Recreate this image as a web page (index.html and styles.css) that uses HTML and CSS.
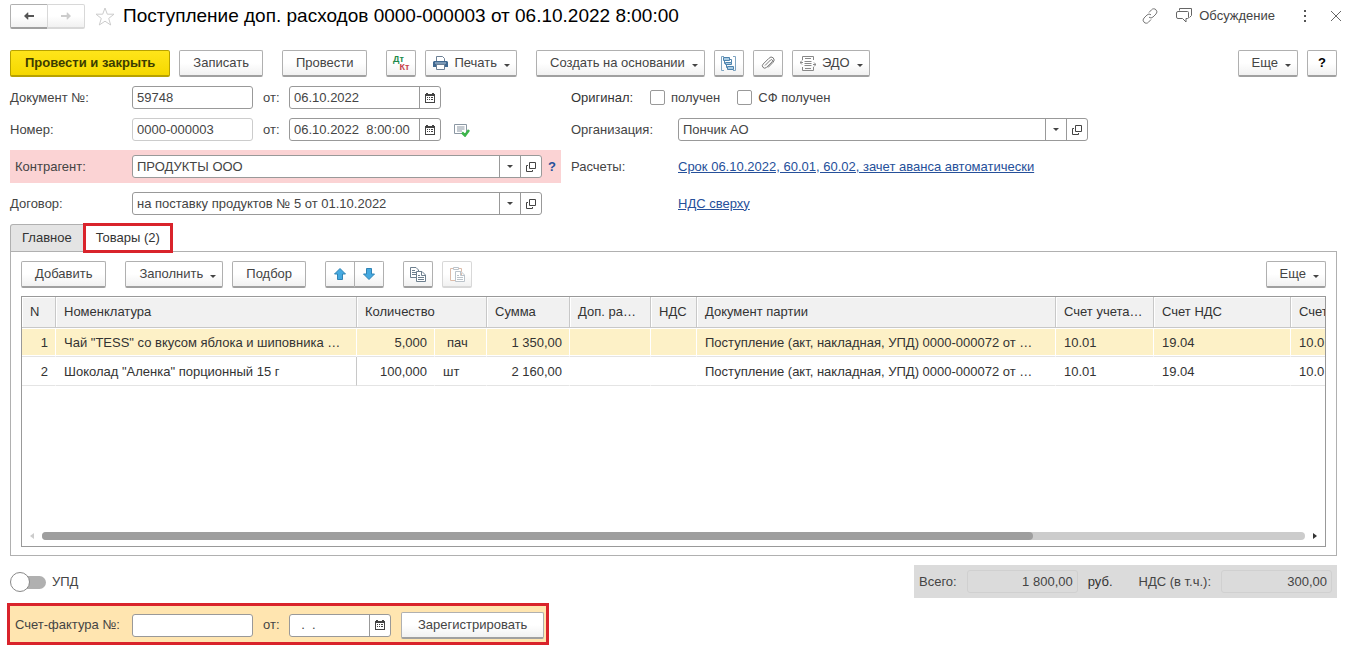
FILE: index.html
```html
<!DOCTYPE html>
<html lang="ru">
  <head>
    <meta charset="UTF-8">
    <title>Поступление доп. расходов</title>
    <link rel="stylesheet" href="styles.css">
  </head>
  <body>
    <!-- shared icons -->
    <svg class="sprite" aria-hidden="true">
      <symbol id="i-calendar" viewBox="0 0 10 10">
        <path d="M0 1h1V0h2v1h4V0h2v1h1v9H0z" fill="#444"/>
        <path d="M1 3h8v6H1z" fill="#fff"/>
        <path d="M2 4h1v1H2zM4 4h1v1H4zM6 4h2v1H6zM2 6h1v1H2zM4 6h1v1H4zM6 6h2v1H6z" fill="#444"/>
      </symbol>
      <symbol id="i-open" viewBox="0 0 10 10">
        <path d="M3.5.5h6v6h-6zM2 3.500H.5v6h6V8" fill="none" stroke="#444"/>
      </symbol>
      <symbol id="i-caret" viewBox="0 0 6 3">
        <path d="M0 0h6L3 3z" fill="#444"/>
      </symbol>
    </svg>

    <header class="titlebar">
      <div class="group">
        <button class="btn nav" aria-label="Назад"><svg width="14" height="10" viewBox="0 0 14 10"><path d="M0 5l5-5h1v3.500h8v3H6V10H5z" fill="#555"/></svg></button>
        <button class="btn nav" aria-label="Вперед" disabled><svg width="14" height="10" viewBox="0 0 14 10"><path d="M14 5L9 0H8v3.500H0v3h8V10h1z" fill="#ccc"/></svg></button>
      </div>
      <button class="plain star" aria-label="Избранное"><svg width="20" height="19" viewBox="0 0 20 19"><path d="M10 1l2.300 6.200H19l-5.300 4.200 2 6.600L10 14.200 4.300 18l2-6.600L1 7.200h6.700z" fill="none" stroke="#ccc"/></svg></button>
      <h1>Поступление доп. расходов 0000-000003 от 06.10.2022 8:00:00</h1>
      <div class="title-tools">
        <button class="plain" aria-label="Ссылка"><svg width="16" height="16" viewBox="0 0 16 16" fill="none" stroke="#777"><path d="M7 4.500l2.500-2.700a3 3 0 0 1 4.500 0 3 3 0 0 1 0 4.200l-3 3a3 3 0 0 1-4 .2M9 11.500l-2.500 2.700a3 3 0 0 1-4.500 0 3 3 0 0 1 0-4.200l3-3a3 3 0 0 1 4-.2"/></svg></button>
        <button class="plain"><svg width="17" height="15" viewBox="0 0 17 15" fill="none" stroke="#666"><path d="M3.500 2.500v-2h12v7l-2 2M2 3.500h9.500q1 0 1 1v5q0 1-1 1H10v3.500L6.500 10.500H2q-1.500 0-1.500-1.500V5q0-1.500 1.500-1.500z"/></svg>Обсуждение</button>
        <button class="plain more" aria-label="Еще"><svg width="4" height="12" viewBox="0 0 4 12" fill="#555"><path d="M1 0h2v2H1zM1 5h2v2H1zM1 10h2v2H1z"/></svg></button>
        <button class="plain close" aria-label="Закрыть"><svg width="12" height="12" viewBox="0 0 12 12"><path d="M1 1l10 10M11 1L1 11" stroke="#666"/></svg></button>
      </div>
    </header>

    <div class="toolbar">
      <button class="btn primary">Провести и закрыть</button>
      <button class="btn">Записать</button>
      <button class="btn sep">Провести</button>
      <button class="btn icon sep dtkt" aria-label="Проводки"><span class="dt">Дт</span><span class="kt">Кт</span></button>
      <button class="btn menu print"><svg width="15" height="14" viewBox="0 0 15 14"><path d="M3.500 5V.5h6l2 2V5" fill="#fff" stroke="#6b7f94"/><path d="M1 5h13l1 1v5H0V6z" fill="#3f6890"/><path d="M2 7h11" stroke="#b9cadb"/><path d="M3.500 8.500h8v5h-8z" fill="#fff" stroke="#6b7f94"/></svg>Печать<svg class="caret"><use href="#i-caret"/></svg></button>
      <button class="btn menu sep">Создать на основании<svg class="caret"><use href="#i-caret"/></svg></button>
      <button class="btn icon" aria-label="Структура подчиненности"><svg width="15" height="15" viewBox="0 0 15 15" fill="none" stroke="#4d83ad"><path d="M3 .5H.5v14H3M12 .5h2.500v14H12" stroke="#7da3c0"/><path d="M2.500 1.500h6v3h-6zM4.500 6.500h6v2h-6zM6.500 10.500h6v3h-6z" fill="#a9cbe3"/><path d="M9 3.500h1.500v3M3.500 5v2.500h1M5.500 9v2.500h1"/></svg></button>
      <button class="btn icon" aria-label="Файлы"><svg width="14" height="14" viewBox="0 0 14 14"><path d="M4 9.500l5.500-5.500q1-1 1.800 0 .8.8-.3 1.900l-5.500 5.500q-1.800 1.700-3.500 0-1.600-1.700.2-3.400l5.500-5.500Q10-.3 12.200 1.800q2.100 2.200 0 4.400L7 11.500" fill="none" stroke="#777"/></svg></button>
      <button class="btn menu edo"><svg width="16" height="15" viewBox="0 0 16 15" fill="none" stroke="#888"><path d="M2.500 4V.5h11V4M2.500 11v3.500h11V11M5 2.500h6M4.500 5.500h7M4.500 7.500h7M4.500 9.500h7M5 12.500h6M0 6.500h3M13 8.500h3M2 4.500l-2 2 2 2M14 6.500l2 2-2 2"/></svg>ЭДО<svg class="caret"><use href="#i-caret"/></svg></button>
      <div class="right">
        <button class="btn menu">Еще<svg class="caret"><use href="#i-caret"/></svg></button>
        <button class="btn icon help">?</button>
      </div>
    </div>

    <form class="fields">
      <div class="column">
        <div class="row">
          <label class="name" for="doc">Документ №:</label>
          <input class="field code" id="doc" value="59748">
          <label class="from" for="docdate">от:</label>
          <div class="combo date"><input id="docdate" value="06.10.2022"><button type="button" aria-label="Календарь"><svg><use href="#i-calendar"/></svg></button></div>
        </div>
        <div class="row">
          <label class="name" for="num">Номер:</label>
          <input class="field code light" id="num" value="0000-000003">
          <label class="from" for="numdate">от:</label>
          <div class="combo date"><input id="numdate" value="06.10.2022  8:00:00"><button type="button" aria-label="Календарь"><svg><use href="#i-calendar"/></svg></button></div>
          <svg class="posted" width="16" height="14" viewBox="0 0 16 14"><path d="M.5 1.500h12v9H.5z" fill="#fff" stroke="#8b97a3"/><path d="M3 4h7.500M3 6h7.500M3 8h5" stroke="#8b97a3"/><path d="M8 9.500l3 3L15 7" fill="none" stroke="#3bb54a" stroke-width="2.500"/></svg>
        </div>
        <div class="row marked">
          <label class="name" for="partner">Контрагент:</label>
          <div class="combo"><select id="partner"><option>ПРОДУКТЫ ООО</option></select><span class="arrow"><svg class="caret"><use href="#i-caret"/></svg></span><button type="button" aria-label="Открыть"><svg><use href="#i-open"/></svg></button></div>
          <a class="hint" href="#">?</a>
        </div>
        <div class="row">
          <label class="name" for="contract">Договор:</label>
          <div class="combo"><select id="contract"><option>на поставку продуктов № 5 от 01.10.2022</option></select><span class="arrow"><svg class="caret"><use href="#i-caret"/></svg></span><button type="button" aria-label="Открыть"><svg><use href="#i-open"/></svg></button></div>
        </div>
      </div>
      <div class="column second">
        <div class="row">
          <span class="original">Оригинал:</span>
          <label class="check"><input type="checkbox">получен</label>
          <label class="check"><input type="checkbox">СФ получен</label>
        </div>
        <div class="row">
          <label class="name" for="org">Организация:</label>
          <div class="combo"><select id="org"><option>Пончик АО</option></select><span class="arrow"><svg class="caret"><use href="#i-caret"/></svg></span><button type="button" aria-label="Открыть"><svg><use href="#i-open"/></svg></button></div>
        </div>
        <div class="row tall">
          <span class="name">Расчеты:</span>
          <a href="#">Срок 06.10.2022, 60.01, 60.02, зачет аванса автоматически</a>
        </div>
        <div class="row">
          <span class="name"></span>
          <a href="#">НДС сверху</a>
        </div>
      </div>
    </form>

    <nav class="tabs">
      <button class="tab">Главное</button>
      <button class="tab active">Товары (2)</button>
    </nav>

    <section class="panel">
      <div class="toolbar">
        <button class="btn">Добавить</button>
        <button class="btn menu sep">Заполнить<svg class="caret"><use href="#i-caret"/></svg></button>
        <button class="btn">Подбор</button>
        <div class="group sep">
          <button class="btn icon" aria-label="Вверх"><svg width="12" height="12" viewBox="0 0 12 12"><path d="M6 .5L11.500 6H8.500v5.500h-5V6H.5z" fill="#45a9e0" stroke="#2f83b5"/></svg></button>
          <button class="btn icon" aria-label="Вниз"><svg width="12" height="12" viewBox="0 0 12 12"><path d="M6 11.500L.5 6h3V.5h5V6h3z" fill="#45a9e0" stroke="#2f83b5"/></svg></button>
        </div>
        <button class="btn icon sep" aria-label="Копировать"><svg width="16" height="15" viewBox="0 0 16 15" fill="#fff" stroke="#6d7f8e"><path d="M.5.5H6L8.500 3v7.500h-8zM2 3.500h3M2 5.500h5M2 7.500h5"/><path d="M6.500 4.500H12L15.500 8v6.500h-9zM11.500 5v3.500H15M8 8.500h2M8 10.500h6M8 12.500h6"/></svg></button>
        <button class="btn icon" aria-label="Вставить" disabled><svg width="15" height="15" viewBox="0 0 15 15" fill="#fff" stroke="#bbc3ca"><path d="M.5 1.500h11v12H.5z" stroke="#dcbcaa"/><path d="M3.500.5h5v2h-5z"/><path d="M5.500 4.500H11L14.500 8v6.500h-9zM10.500 5v3.500H14M7 8.500h2M7 10.500h6M7 12.500h6"/></svg></button>
        <div class="right">
          <button class="btn menu">Еще<svg class="caret"><use href="#i-caret"/></svg></button>
        </div>
      </div>

      <div class="grid">
        <table>
          <colgroup>
            <col class="c-n"><col class="c-item"><col class="c-qty"><col class="c-unit"><col class="c-sum"><col class="c-extra"><col class="c-vat"><col class="c-doc"><col class="c-acc"><col class="c-vatacc"><col class="c-acc">
          </colgroup>
          <thead>
            <tr><th>N</th><th>Номенклатура</th><th colspan="2">Количество</th><th>Сумма</th><th>Доп. ра…</th><th>НДС</th><th>Документ партии</th><th>Счет учета…</th><th>Счет НДС</th><th>Счет</th></tr>
          </thead>
          <tbody>
            <tr class="selected"><td class="num">1</td><td>Чай "TESS" со вкусом яблока и шиповника …</td><td class="num">5,000</td><td class="unit">пач</td><td class="num">1 350,00</td><td></td><td></td><td>Поступление (акт, накладная, УПД) 0000-000072 от …</td><td>10.01</td><td>19.04</td><td>10.0</td></tr>
            <tr><td class="num">2</td><td class="edge">Шоколад "Аленка" порционный 15 г</td><td class="num">100,000</td><td>шт</td><td class="num">2 160,00</td><td></td><td></td><td>Поступление (акт, накладная, УПД) 0000-000072 от …</td><td>10.01</td><td>19.04</td><td>10.0</td></tr>
          </tbody>
        </table>
        <div class="scroll">
          <svg width="4" height="6" viewBox="0 0 4 6"><path d="M4 0v6L0 3z" fill="#ccc"/></svg>
          <div class="track"><div class="thumb"></div></div>
          <svg width="4" height="6" viewBox="0 0 4 6"><path d="M0 0v6l4-3z" fill="#333"/></svg>
        </div>
      </div>
    </section>

    <footer>
      <div class="totals-row">
        <label class="switch"><input type="checkbox">УПД</label>
        <div class="totals">
          <label for="total">Всего:</label>
          <input id="total" value="1 800,00" readonly>
          <span class="currency">руб.</span>
          <label for="vat">НДС (в т.ч.):</label>
          <input id="vat" value="300,00" readonly>
        </div>
      </div>
      <div class="invoice">
        <label class="name" for="invoice">Счет-фактура №:</label>
        <input class="field code" id="invoice">
        <label class="from" for="invdate">от:</label>
        <div class="combo date short"><input id="invdate" value="  .  ."><button type="button" aria-label="Календарь"><svg><use href="#i-calendar"/></svg></button></div>
        <button class="btn">Зарегистрировать</button>
      </div>
    </footer>
  </body>
</html>
```
FILE: styles.css
```css
* {
  box-sizing: border-box;
}

body {
  margin: 0;
  padding: 4px 12px 0 10px;
  background: #fff;
  color: #444;
  font: 13px/16px "Liberation Sans", Arial, sans-serif;
}

button, input, select {
  font: inherit;
  color: inherit;
}

a {
  color: #26509a;
}

.sprite {
  position: absolute;
  width: 0;
  height: 0;
}

/* Buttons */
.btn {
  display: flex;
  align-items: center;
  justify-content: center;
  flex: none;
  height: 27px;
  padding: 0 13px;
  border: 1px solid #b0b0b0;
  border-bottom: 2px solid #a0a0a0;
  border-radius: 2px;
  background: linear-gradient(#fff 50%, #f1f1f1);
  white-space: nowrap;
}

.btn.icon {
  width: 30px;
  padding: 0;
}

.btn.menu {
  padding: 0 6px 0 13px;
}

.btn.print, .btn.edo {
  gap: 6px;
  padding-left: 7px;
}

.btn:disabled {
  border-color: #d8d8d8;
}

.btn.primary {
  padding: 0 14px;
  border-color: #b8a200;
  background: linear-gradient(#ffe51a, #f5d800);
  color: #3c3c00;
  font-weight: bold;
}

.caret {
  width: 6px;
  height: 3px;
  margin-top: 4px;
}

.menu .caret {
  margin-left: 7px;
}

.print .caret, .edo .caret {
  margin-left: 1px;
}

.plain {
  display: flex;
  align-items: center;
  gap: 6px;
  padding: 0;
  border: 0;
  background: none;
}

.group {
  display: flex;
}

.group .btn:first-child {
  border-radius: 2px 0 0 2px;
}

.group .btn + .btn {
  margin-left: -1px;
  border-radius: 0 2px 2px 0;
}

/* Title */
.titlebar {
  display: flex;
  align-items: center;
  height: 25px;
}

.titlebar .nav {
  width: 38px;
  height: 25px;
}

.star {
  margin: 0 8px 0 10px;
}

h1 {
  margin: 0 0 2px;
  color: #000;
  font-size: 19px;
  font-weight: normal;
  line-height: 24px;
}

.title-tools {
  display: flex;
  align-items: center;
  gap: 18px;
  margin: 0 -5px 2px auto;
}

.title-tools .more {
  margin-left: 10px;
}

.title-tools .close {
  margin-left: 5px;
}

/* Toolbars */
.toolbar {
  display: flex;
  gap: 9px;
  margin-top: 21px;
}

.toolbar .sep {
  margin-left: 10px;
}

.toolbar .right {
  display: flex;
  gap: 9px;
  margin-left: auto;
}

.help {
  color: #000;
  font-weight: bold;
}

.dtkt {
  flex-direction: column;
  font-size: 9px;
  font-weight: bold;
  line-height: 8px;
}

.dt {
  margin-right: 6px;
  color: #1d8a4a;
}

.kt {
  margin-left: 6px;
  color: #c8424a;
}

/* Form */
.fields {
  display: flex;
  gap: 10px;
  margin-top: 9px;
}

.column {
  display: flex;
  flex-direction: column;
  gap: 9px;
  width: 551px;
}

.column.second {
  width: 517px;
}

.row {
  display: flex;
  align-items: center;
  height: 23px;
}

.row.tall, .row.marked {
  height: 33px;
}

.row.marked {
  padding-left: 5px;
  background: #fbd3d4;
}

.name {
  flex: none;
  width: 122px;
}

.marked .name, .invoice .name {
  width: 117px;
}

.second .name {
  width: 107px;
}

.field, .combo {
  height: 23px;
  border: 1px solid #999;
  border-radius: 3px;
  background: #fff;
}

.field {
  padding: 0 4px;
}

.code {
  width: 121px;
}

.light {
  border-color: #ccc;
}

.from {
  width: 36px;
  padding-left: 10px;
}

.combo {
  display: flex;
  width: 410px;
}

.combo.date {
  width: 152px;
}

.combo.short {
  width: 102px;
}

.combo input, .combo select {
  flex: 1;
  min-width: 0;
  padding: 0 4px;
  border: 0;
  background: none;
  appearance: none;
  white-space: pre;
}

.combo button, .arrow {
  display: flex;
  flex: none;
  align-items: center;
  justify-content: center;
  width: 21px;
  padding: 0;
  border: 0;
  border-left: 1px solid #999;
  background: none;
}

.combo button svg {
  width: 10px;
  height: 10px;
}

.arrow .caret {
  margin: 0;
}

.posted {
  margin-left: 13px;
}

.hint {
  margin-left: 6px;
  font-weight: bold;
  text-decoration: none;
}

.original {
  width: 79px;
  color: #333;
}

.check {
  display: flex;
  align-items: center;
  gap: 6px;
  margin-right: 17px;
}

.check input {
  width: 15px;
  height: 15px;
  margin: 0;
  border: 1px solid #999;
  border-radius: 2px;
  appearance: none;
}

/* Tabs */
.tabs {
  display: flex;
  height: 27px;
  margin-top: 9px;
}

.tab {
  padding: 0 11px;
  border: 1px solid #b0b0b0;
  border-bottom: 0;
  border-radius: 3px 0 0 0;
  background: #e4e4e4;
  color: #333;
}

.tab.active {
  z-index: 1;
  height: 30px;
  padding: 0 10px;
  margin: -1px 0 0 -1px;
  border: 3px solid #d9232b;
  border-radius: 0;
  background: #fff;
}

/* Goods */
.panel {
  padding: 9px 10px 8px;
  border: 1px solid #b0b0b0;
}

.panel .toolbar {
  margin: 0;
}

.grid {
  display: flex;
  flex-direction: column;
  height: 251px;
  margin-top: 8px;
  overflow: hidden;
  border: 1px solid #999;
}

table {
  width: 1366px;
  border-collapse: separate;
  border-spacing: 0;
  table-layout: fixed;
  color: #333;
}

.c-n { width: 34px; }
.c-item { width: 301px; }
.c-qty { width: 78px; }
.c-unit { width: 52px; }
.c-sum { width: 83px; }
.c-extra { width: 81px; }
.c-vat { width: 46px; }
.c-doc { width: 359px; }
.c-acc { width: 98px; }
.c-vatacc { width: 137px; }

th, td {
  padding: 0 7px 0 8px;
  overflow: hidden;
  text-align: left;
  white-space: nowrap;
}

th {
  height: 31px;
  border-right: 1px solid #c8c8c8;
  border-bottom: 1px solid #c8c8c8;
  background: #f1f1f1;
  box-shadow: inset 1px 1px #fff;
  font-weight: normal;
}

td {
  height: 29px;
  padding-top: 2px;
  border-right: 1px solid transparent;
  border-bottom: 1px solid #e4e4e4;
}

.selected td {
  border-right-color: #fff;
  background: #fdf1c7;
  box-shadow: inset 0 1px #fff, inset 0 -1px #fff;
}

td.edge {
  border-right-color: #c8c8c8;
}

.num {
  text-align: right;
}

td.unit {
  padding-left: 12px;
}

.scroll {
  display: flex;
  align-items: center;
  gap: 8px;
  margin-top: auto;
  padding: 6px 8px;
}

.track {
  flex: 1;
  height: 8px;
  border-radius: 4px;
  background: #ccc;
}

.thumb {
  width: 78.5%;
  height: 8px;
  border-radius: 4px;
  background: #9e9e9e;
}

/* Footer */
.totals-row {
  display: flex;
  align-items: center;
  justify-content: space-between;
  margin-top: 9px;
}

.switch {
  display: flex;
  align-items: center;
  gap: 6px;
}

.switch input {
  position: relative;
  width: 36px;
  height: 20px;
  margin: 0;
  appearance: none;
}

.switch input::before {
  content: "";
  position: absolute;
  inset: 4px 0 3px 4px;
  border-radius: 7px;
  background: #b0b0b0;
}

.switch input::after {
  content: "";
  position: absolute;
  top: 0;
  left: 0;
  box-sizing: border-box;
  width: 20px;
  height: 20px;
  border: 1px solid #888;
  border-radius: 50%;
  background: #fff;
}

.totals {
  display: flex;
  align-items: center;
  height: 33px;
  padding: 0 5px;
  background: #dbdbdb;
}

.totals input {
  width: 111px;
  height: 23px;
  margin-left: 10px;
  padding: 0 4px;
  border: 1px solid #d0d0d0;
  border-radius: 3px;
  background: none;
  text-align: right;
}

.currency {
  margin: 0 26px 0 10px;
  color: #333;
}

.invoice {
  display: flex;
  align-items: center;
  width: 542px;
  height: 42px;
  margin: 5px 0 0 -3px;
  padding: 2px 0 0 5px;
  border: 3px solid #d9232b;
  background: #ffe5b0;
}

.invoice .btn {
  margin-left: 10px;
  padding: 0 16px;
}
```
